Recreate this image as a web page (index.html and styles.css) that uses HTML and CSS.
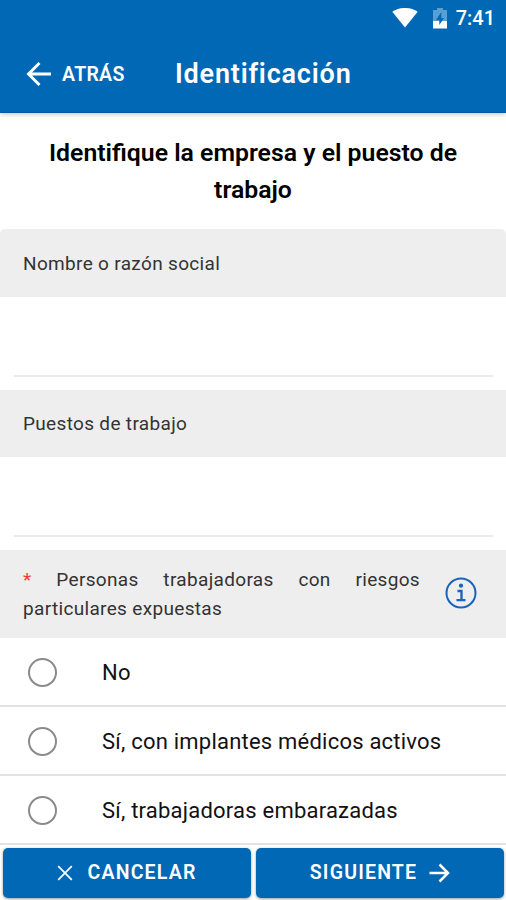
FILE: index.html
```html
<!DOCTYPE html>
<html lang="es">
<head>
    <meta charset="UTF-8">
    <meta name="viewport" content="width=device-width, initial-scale=1.0">
    <title>Identificación</title>
    <link rel="stylesheet" href="styles.css">
</head>
<body>
    <header class="header">
        <div class="status-bar">
            <svg class="wifi-icon" width="26" height="21" viewBox="0 0 26 21" fill="currentColor">
                <path d="M0.300 3.800C7.600-1.300 18.400-1.300 25.700 3.800L13 19.500Z"></path>
            </svg>
            <svg class="battery-icon" width="14" height="21" viewBox="0 0 14 21">
                <path d="M4 0h6v2h4v11H0V2h4Z" fill="#5a9fd2"></path>
                <path d="M0 13h14v7.500H0Z" fill="#fff"></path>
                <path d="M8.300 4L3 12h3.300v5L11 10H8.300Z" fill="#0068b5"></path>
            </svg>
            <span class="clock">7:41</span>
        </div>
        <div class="toolbar">
            <button class="back-button">
                <svg width="26" height="24" viewBox="0 0 26 24" fill="none" stroke="currentColor" stroke-width="2.900">
                    <path d="M13.500 1L2.500 12l11 11M2.500 12H25"></path>
                </svg>
                <span>ATRÁS</span>
            </button>
            <h1 class="page-title">Identificación</h1>
        </div>
    </header>

    <main class="content">
        <h2 class="form-title">Identifique la empresa y el puesto de trabajo</h2>

        <section class="field">
            <label class="field-label rounded" for="company">Nombre o razón social</label>
            <input type="text" class="field-input" id="company">
        </section>

        <section class="field">
            <label class="field-label" for="job">Puestos de trabajo</label>
            <input type="text" class="field-input" id="job">
        </section>

        <section class="risks">
            <div class="risks-header">
                <p class="risks-label"><span class="required">*</span> <span>Personas trabajadoras con riesgos</span> <span>particulares expuestas</span></p>
                <svg class="info-icon" width="32" height="32" viewBox="0 0 32 32" fill="none" stroke="currentColor" stroke-width="2">
                    <circle cx="16" cy="16" r="14.500"></circle>
                    <circle cx="16" cy="8.700" r="2.100" fill="currentColor" stroke="none"></circle>
                    <path d="M12.500 14h4v9M11.500 23.200h9" stroke-width="2.300"></path>
                </svg>
            </div>
            <label class="option">
                <input type="radio" class="radio" name="risk">
                <span>No</span>
            </label>
            <label class="option">
                <input type="radio" class="radio" name="risk">
                <span>Sí, con implantes médicos activos</span>
            </label>
            <label class="option">
                <input type="radio" class="radio" name="risk">
                <span>Sí, trabajadoras embarazadas</span>
            </label>
        </section>
    </main>

    <footer class="actions">
        <button class="action-button">
            <svg width="16" height="16" viewBox="0 0 16 16" fill="none" stroke="currentColor" stroke-width="1.700">
                <path d="M1.200 1.200l13.600 13.600M14.800 1.200L1.200 14.800"></path>
            </svg>
            <span>CANCELAR</span>
        </button>
        <button class="action-button next">
            <span>SIGUIENTE</span>
            <svg width="21" height="20" viewBox="0 0 21 20" fill="none" stroke="currentColor" stroke-width="2.500">
                <path d="M10.500 1.500L19 10l-8.500 8.500M19 10H0.500"></path>
            </svg>
        </button>
    </footer>
</body>
</html>
```

FILE: styles.css
```css
* {
    box-sizing: border-box;
}

body {
    display: flex;
    flex-direction: column;
    height: 900px;
    margin: 0;
    overflow: hidden;
    font-family: Roboto, sans-serif;
    color: #111;
    background-color: #fff;
}

button {
    display: flex;
    align-items: center;
    border: none;
    padding: 0;
    font-family: inherit;
    color: #fff;
    background-color: transparent;
}

.header {
    flex: none;
    height: 113px;
    color: #fff;
    background-color: #0068b5;
    border-bottom: 1px solid #0759a5;
    box-shadow: 0 1px 5px rgba(0, 0, 0, 0.25);
}

.status-bar {
    display: flex;
    align-items: center;
    justify-content: flex-end;
    height: 36px;
    padding-right: 11px;
}

.wifi-icon {
    margin-right: 15px;
}

.battery-icon {
    margin-right: 9px;
}

.clock {
    font-size: 20px;
    font-weight: 500;
}

.toolbar {
    display: flex;
    align-items: center;
    height: 76px;
    padding-left: 26px;
}

.back-button {
    gap: 10px;
    width: 149px;
    font-size: 19.5px;
    font-weight: 600;
    letter-spacing: 0.3px;
}

.page-title {
    margin: 0;
    font-size: 27px;
    font-weight: 600;
    letter-spacing: 0.8px;
}

.content {
    flex: 1;
    min-height: 0;
}

.form-title {
    margin: 0;
    padding: 21px 30px;
    font-size: 24.8px;
    font-weight: 600;
    line-height: 37px;
    text-align: center;
    color: #000;
}

.field {
    height: 161px;
}

.field + .field {
    height: 160px;
}

.field-label {
    display: flex;
    align-items: center;
    height: 67px;
    padding-left: 23px;
    font-size: 19px;
    letter-spacing: 0.33px;
    color: #333;
    background-color: #eee;
}

.field-label.rounded {
    height: 68px;
    border-radius: 5px 5px 0 0;
}

.field-input {
    display: block;
    width: 479px;
    height: 80px;
    margin: 0 14px;
    border: none;
    border-bottom: 2px solid #eaeaea;
    outline: none;
    font-size: 19px;
}

.risks-header {
    display: flex;
    align-items: center;
    height: 88px;
    padding: 0 29px 2px 23px;
    background-color: #eee;
}

.risks-label {
    width: 397px;
    margin: 0 25px 0 0;
    padding-top: 2px;
    font-size: 19px;
    line-height: 29px;
    letter-spacing: 0.33px;
    text-align: justify;
    color: #333;
}

.required {
    color: #f03a3a;
}

.info-icon {
    flex: none;
    margin-top: -1px;
    color: #1a63b8;
}

.option {
    display: flex;
    align-items: center;
    height: 69px;
    padding: 2px 0 0 28px;
    border-bottom: 2px solid #e2e2e2;
    font-size: 22px;
    letter-spacing: 0.22px;
}

.radio {
    appearance: none;
    width: 29px;
    height: 29px;
    margin: 0 45px 0 0;
    border: 2px solid #8b8b8b;
    border-radius: 50%;
}

.actions {
    display: flex;
    flex: none;
    gap: 5px;
    padding: 3px 2px 2px 3px;
    background-color: #fff;
}

.action-button {
    flex: 1;
    justify-content: center;
    gap: 14px;
    height: 50px;
    padding-bottom: 1px;
    border-radius: 5px;
    font-size: 19.5px;
    font-weight: 600;
    letter-spacing: 1.2px;
    background-color: #0068b5;
    box-shadow: 0 1px 3px rgba(0, 0, 0, 0.4);
}

.action-button.next {
    gap: 12px;
}
```
